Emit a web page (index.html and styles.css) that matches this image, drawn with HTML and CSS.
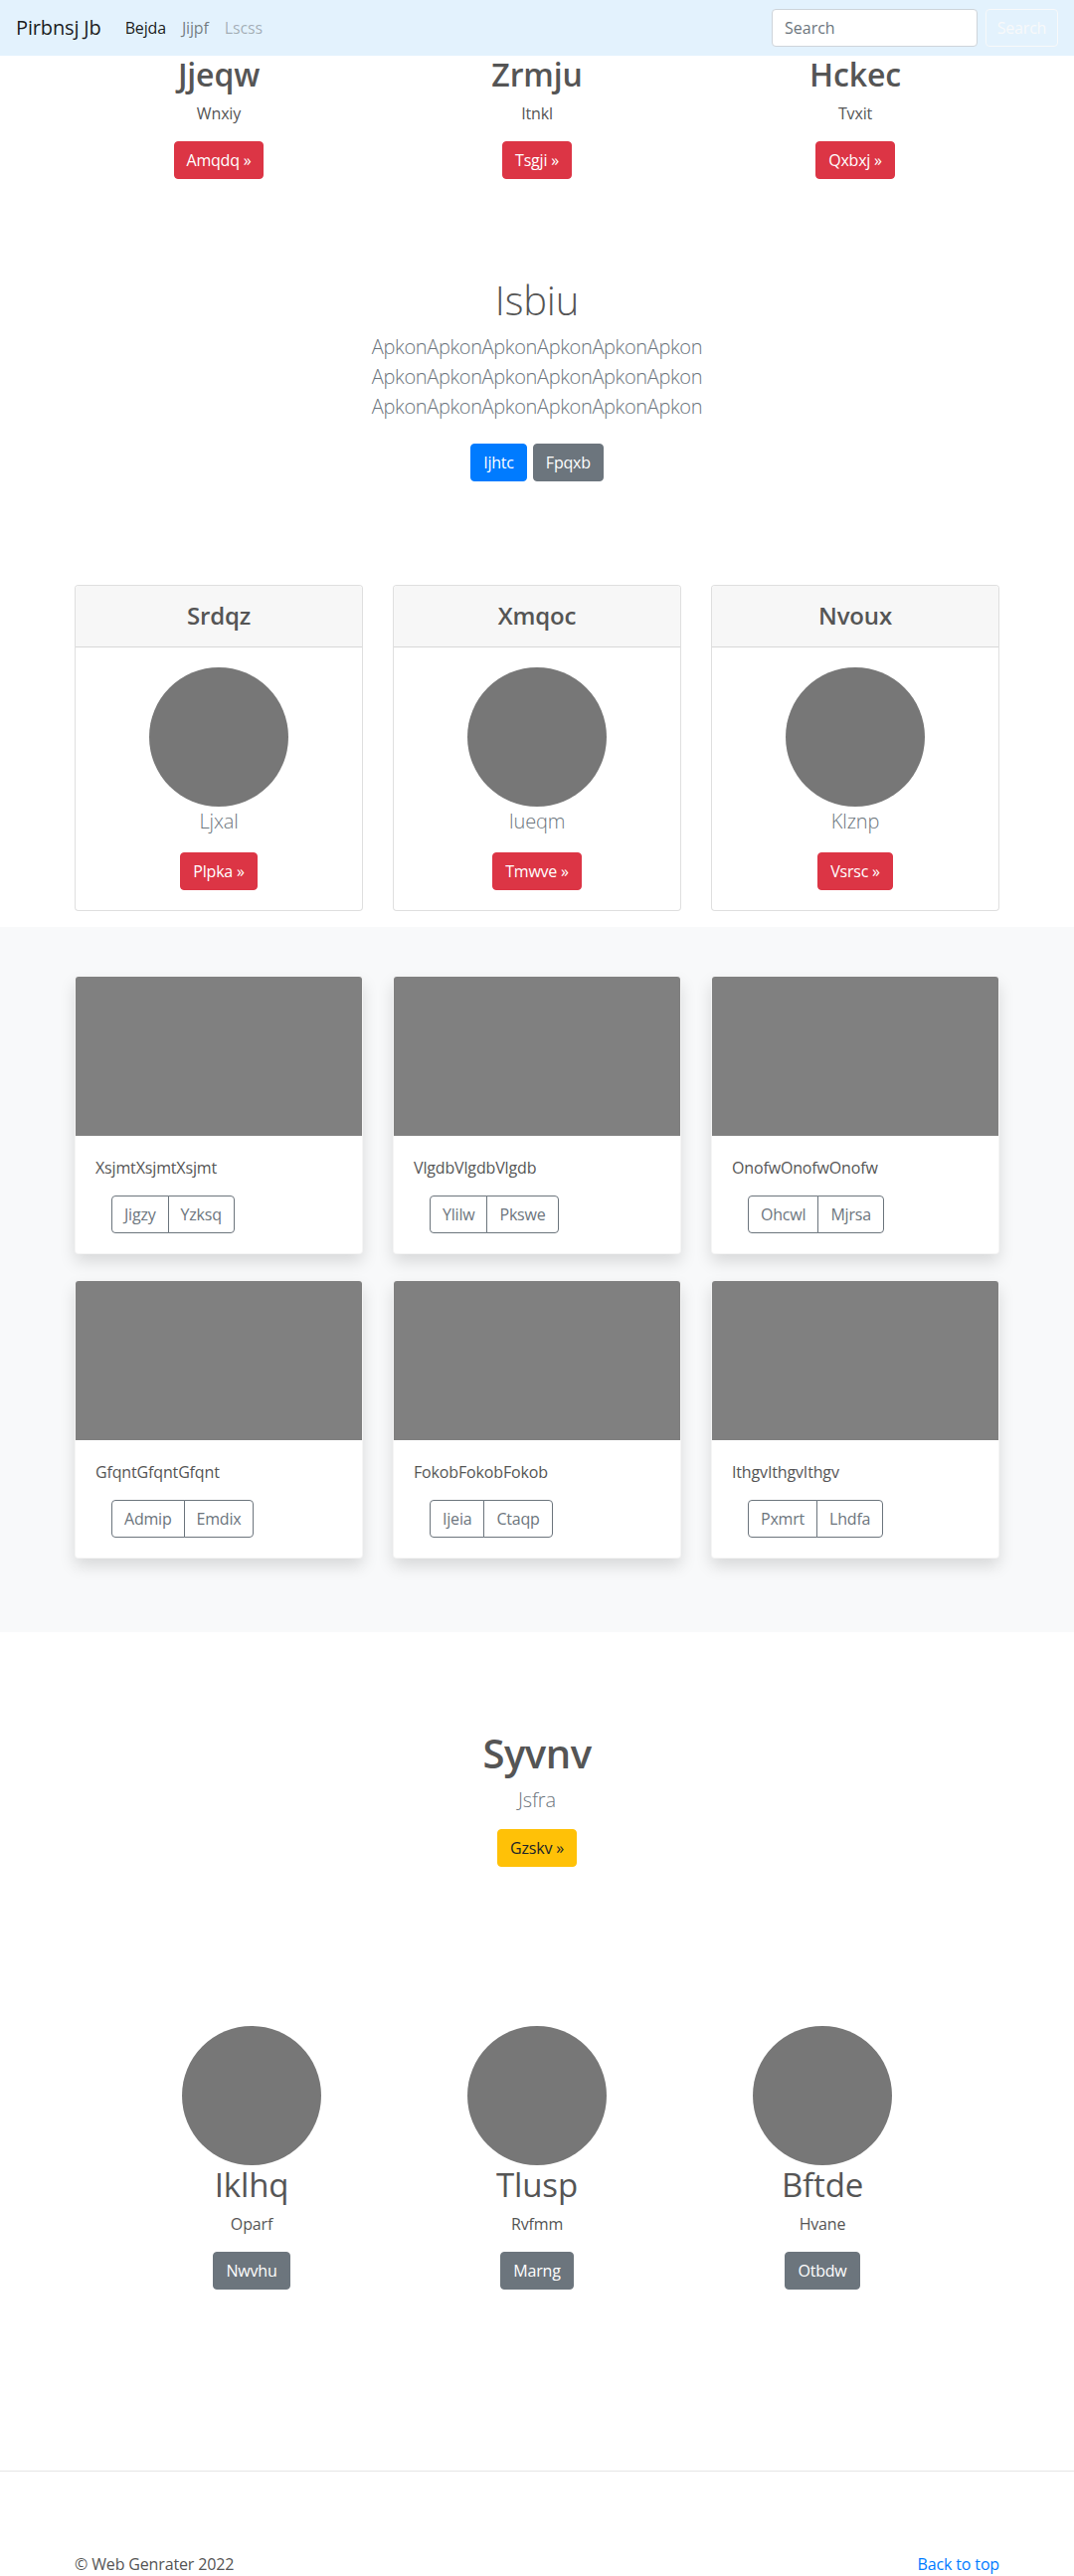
FILE: index.html
```html
<!DOCTYPE html>
<html lang="en">
<head>
<meta charset="utf-8">
<title>Pirbnsj Jb</title>
<link rel="stylesheet" href="styles.css">
</head>
<body>
<nav class="navbar">
  <a class="brand" href="#">Pirbnsj Jb</a>
  <ul class="nav-links">
    <li><a class="nav-link active" href="#">Bejda</a></li>
    <li><a class="nav-link" href="#">Jijpf</a></li>
    <li><a class="nav-link disabled" href="#">Lscss</a></li>
  </ul>
  <form class="search-form">
    <input class="search-input" type="text" placeholder="Search">
    <button class="btn btn-outline-light" type="button">Search</button>
  </form>
</nav>

<section class="features">
  <div class="container three-cols">
    <div class="feature">
      <h2 class="feature-title">Jjeqw</h2>
      <p class="feature-text">Wnxiy</p>
      <p class="feature-action"><a class="btn btn-danger" href="#">Amqdq »</a></p>
    </div>
    <div class="feature">
      <h2 class="feature-title">Zrmju</h2>
      <p class="feature-text">Itnkl</p>
      <p class="feature-action"><a class="btn btn-danger" href="#">Tsgji »</a></p>
    </div>
    <div class="feature">
      <h2 class="feature-title">Hckec</h2>
      <p class="feature-text">Tvxit</p>
      <p class="feature-action"><a class="btn btn-danger" href="#">Qxbxj »</a></p>
    </div>
  </div>
</section>

<section class="jumbotron">
  <h1 class="jumbotron-heading">Isbiu</h1>
  <p class="lead jumbotron-lead">ApkonApkonApkonApkonApkonApkon ApkonApkonApkonApkonApkonApkon ApkonApkonApkonApkonApkonApkon</p>
  <div class="jumbotron-actions">
    <a class="btn btn-primary" href="#">Ijhtc</a>
    <a class="btn btn-secondary" href="#">Fpqxb</a>
  </div>
</section>

<section class="pricing">
  <div class="container card-deck">
    <div class="card">
      <div class="card-header"><h4 class="card-title">Srdqz</h4></div>
      <div class="card-body">
        <div class="avatar"></div>
        <p class="lead muted">Ljxal</p>
        <a class="btn btn-danger" href="#">Plpka »</a>
      </div>
    </div>
    <div class="card">
      <div class="card-header"><h4 class="card-title">Xmqoc</h4></div>
      <div class="card-body">
        <div class="avatar"></div>
        <p class="lead muted">Iueqm</p>
        <a class="btn btn-danger" href="#">Tmwve »</a>
      </div>
    </div>
    <div class="card">
      <div class="card-header"><h4 class="card-title">Nvoux</h4></div>
      <div class="card-body">
        <div class="avatar"></div>
        <p class="lead muted">Klznp</p>
        <a class="btn btn-danger" href="#">Vsrsc »</a>
      </div>
    </div>
  </div>
</section>

<section class="album">
  <div class="container album-grid">
    <div class="album-card">
      <div class="thumb"></div>
      <div class="album-body">
        <p class="album-text">XsjmtXsjmtXsjmt</p>
        <div class="btn-group"><a class="btn btn-outline-secondary" href="#">Jigzy</a><a class="btn btn-outline-secondary" href="#">Yzksq</a></div>
      </div>
    </div>
    <div class="album-card">
      <div class="thumb"></div>
      <div class="album-body">
        <p class="album-text">VlgdbVlgdbVlgdb</p>
        <div class="btn-group"><a class="btn btn-outline-secondary" href="#">Ylilw</a><a class="btn btn-outline-secondary" href="#">Pkswe</a></div>
      </div>
    </div>
    <div class="album-card">
      <div class="thumb"></div>
      <div class="album-body">
        <p class="album-text">OnofwOnofwOnofw</p>
        <div class="btn-group"><a class="btn btn-outline-secondary" href="#">Ohcwl</a><a class="btn btn-outline-secondary" href="#">Mjrsa</a></div>
      </div>
    </div>
    <div class="album-card">
      <div class="thumb"></div>
      <div class="album-body">
        <p class="album-text">GfqntGfqntGfqnt</p>
        <div class="btn-group"><a class="btn btn-outline-secondary" href="#">Admip</a><a class="btn btn-outline-secondary" href="#">Emdix</a></div>
      </div>
    </div>
    <div class="album-card">
      <div class="thumb"></div>
      <div class="album-body">
        <p class="album-text">FokobFokobFokob</p>
        <div class="btn-group"><a class="btn btn-outline-secondary" href="#">Ijeia</a><a class="btn btn-outline-secondary" href="#">Ctaqp</a></div>
      </div>
    </div>
    <div class="album-card">
      <div class="thumb"></div>
      <div class="album-body">
        <p class="album-text">IthgvIthgvIthgv</p>
        <div class="btn-group"><a class="btn btn-outline-secondary" href="#">Pxmrt</a><a class="btn btn-outline-secondary" href="#">Lhdfa</a></div>
      </div>
    </div>
  </div>
</section>

<section class="cta">
  <h1 class="cta-title">Syvnv</h1>
  <p class="lead muted cta-lead">Jsfra</p>
  <a class="btn btn-warning" href="#">Gzskv »</a>
</section>

<section class="marketing">
  <div class="marketing-grid">
    <div class="person">
      <div class="avatar"></div>
      <h2 class="person-name">Iklhq</h2>
      <p class="person-text">Oparf</p>
      <a class="btn btn-secondary" href="#">Nwvhu</a>
    </div>
    <div class="person">
      <div class="avatar"></div>
      <h2 class="person-name">Tlusp</h2>
      <p class="person-text">Rvfmm</p>
      <a class="btn btn-secondary" href="#">Marng</a>
    </div>
    <div class="person">
      <div class="avatar"></div>
      <h2 class="person-name">Bftde</h2>
      <p class="person-text">Hvane</p>
      <a class="btn btn-secondary" href="#">Otbdw</a>
    </div>
  </div>
</section>

<footer class="footer">
  <div class="container footer-row">
    <p class="copyright">© Web Genrater 2022</p>
    <a class="back-top" href="#">Back to top</a>
  </div>
</footer>
</body>
</html>
```

FILE: styles.css
```css
* { box-sizing: border-box; }

html, body {
  margin: 0;
  padding: 0;
}

body {
  font-family: "Open Sans", "Noto Sans", "Liberation Sans", sans-serif;
  font-size: 16px;
  line-height: 1.5;
  color: #555;
  background: #fff;
  letter-spacing: -0.15px;
}

a { text-decoration: none; }

p { margin: 0; }

h1, h2, h4 { margin: 0; line-height: 1.2; }

.container {
  width: 960px;
  margin: 0 auto;
  padding: 0 15px;
}

/* ---------- buttons ---------- */
.btn {
  display: inline-block;
  padding: 6px 12px;
  font-size: 16px;
  line-height: 24px;
  border: 1px solid transparent;
  border-radius: 4px;
  text-align: center;
  white-space: nowrap;
  font-family: inherit;
  letter-spacing: -0.2px;
}
.btn-danger { background: #dc3545; border-color: #dc3545; color: #fff; }
.btn-primary { background: #007bff; border-color: #007bff; color: #fff; }
.btn-secondary { background: #6c757d; border-color: #6c757d; color: #fff; }
.btn-warning { background: #ffc107; border-color: #ffc107; color: #212529; }
.btn-outline-light { background: transparent; border-color: #f8f9fa; color: #f8f9fa; }
.btn-outline-secondary { background: #fff; border-color: #6c757d; color: #6c757d; }

/* ---------- navbar ---------- */
.navbar {
  height: 56px;
  background: #e3f2fd;
  display: flex;
  align-items: center;
  padding: 8px 16px;
}
.brand {
  font-size: 20px;
  line-height: 30px;
  color: rgba(0, 0, 0, 0.9);
  margin-right: 16px;
}
.nav-links {
  list-style: none;
  display: flex;
  margin: 0;
  padding: 0;
}
.nav-link {
  display: block;
  padding: 8px;
  color: rgba(0, 0, 0, 0.5);
}
.nav-link.active { color: rgba(0, 0, 0, 0.9); }
.nav-link.disabled { color: rgba(0, 0, 0, 0.3); }
.search-form {
  margin-left: auto;
  display: flex;
  align-items: center;
}
.search-input {
  width: 207px;
  height: 38px;
  padding: 6px 12px;
  font-size: 16px;
  font-family: inherit;
  color: #495057;
  border: 1px solid #ced4da;
  border-radius: 4px;
  background: #fff;
  margin-right: 8px;
}
.search-input::placeholder { color: #6c757d; }
.search-form .btn { width: 73px; padding: 6px 0; }

/* ---------- features ---------- */
.three-cols {
  display: grid;
  grid-template-columns: repeat(3, 1fr);
  padding: 0;
}
.feature { text-align: center; padding: 0 15px; }
.feature-title {
  font-size: 32px;
  font-weight: 600;
  color: #555;
  margin-bottom: 8px;
}
.feature-text { margin-bottom: 16px; }
.feature-action { margin-bottom: 16px; }

/* ---------- jumbotron ---------- */
.jumbotron {
  text-align: center;
  padding: 82px 0 104px;
}
.jumbotron-heading {
  font-size: 40px;
  font-weight: 300;
  color: #555;
  margin-bottom: 8px;
}
.lead {
  font-size: 20px;
  font-weight: 300;
  line-height: 30px;
}
.muted { color: #6c757d; }
.jumbotron-lead {
  color: #6c757d;
  max-width: 420px;
  margin: 0 auto 22px;
  letter-spacing: -0.35px;
}
.jumbotron-actions {
  display: flex;
  justify-content: center;
  gap: 6px;
}

/* ---------- pricing ---------- */
.pricing { padding-bottom: 16px; }
.card-deck {
  display: grid;
  grid-template-columns: repeat(3, 1fr);
  column-gap: 30px;
}
.card {
  border: 1px solid rgba(0, 0, 0, 0.125);
  border-radius: 4px;
  background: #fff;
  overflow: hidden;
}
.card-header {
  background: #f7f7f7;
  border-bottom: 1px solid rgba(0, 0, 0, 0.125);
  padding: 16px 20px;
  text-align: center;
}
.card-title {
  font-size: 24px;
  font-weight: 600;
  color: #555;
}
.card-body {
  padding: 20px;
  text-align: center;
}
.avatar {
  width: 140px;
  height: 140px;
  border-radius: 50%;
  background: #777;
  margin: 0 auto;
}
.card-body .lead { margin-bottom: 16px; }

/* ---------- album ---------- */
.album {
  background: #f8f9fa;
  padding: 49px 0 74px;
}
.album-grid {
  display: grid;
  grid-template-columns: repeat(3, 1fr);
  column-gap: 30px;
  row-gap: 26px;
}
.album-card {
  background: #fff;
  border: 1px solid rgba(0, 0, 0, 0.04);
  border-radius: 4px;
  overflow: hidden;
  box-shadow: 0 8px 16px rgba(0, 0, 0, 0.13);
}
.thumb {
  height: 160px;
  background: #808080;
}
.album-body { padding: 20px; }
.album-text { margin-bottom: 16px; color: #555; }
.btn-group {
  display: inline-flex;
  margin-left: 16px;
}
.btn-group .btn:first-child {
  border-top-right-radius: 0;
  border-bottom-right-radius: 0;
}
.btn-group .btn:last-child {
  border-top-left-radius: 0;
  border-bottom-left-radius: 0;
  margin-left: -1px;
}

/* ---------- call to action ---------- */
.cta {
  text-align: center;
  padding-top: 98px;
}
.cta-title {
  font-size: 40px;
  font-weight: 600;
  color: #555;
  margin-bottom: 8px;
  letter-spacing: -0.5px;
}
.cta-lead { margin-bottom: 14px; }

/* ---------- marketing ---------- */
.marketing { padding: 160px 0 182px; }
.marketing-grid {
  display: grid;
  grid-template-columns: repeat(3, 287px);
  justify-content: center;
}
.person { text-align: center; }
.person-name {
  font-size: 33px;
  font-weight: 400;
  color: #555;
  margin-bottom: 7px;
}
.person-text { margin-bottom: 16px; }

/* ---------- footer ---------- */
.footer {
  border-top: 1px solid #e5e5e5;
  padding: 81px 0 48px;
}
.footer-row {
  display: flex;
  justify-content: space-between;
}
.copyright { color: #555; }
.back-top { color: #007bff; }
```
